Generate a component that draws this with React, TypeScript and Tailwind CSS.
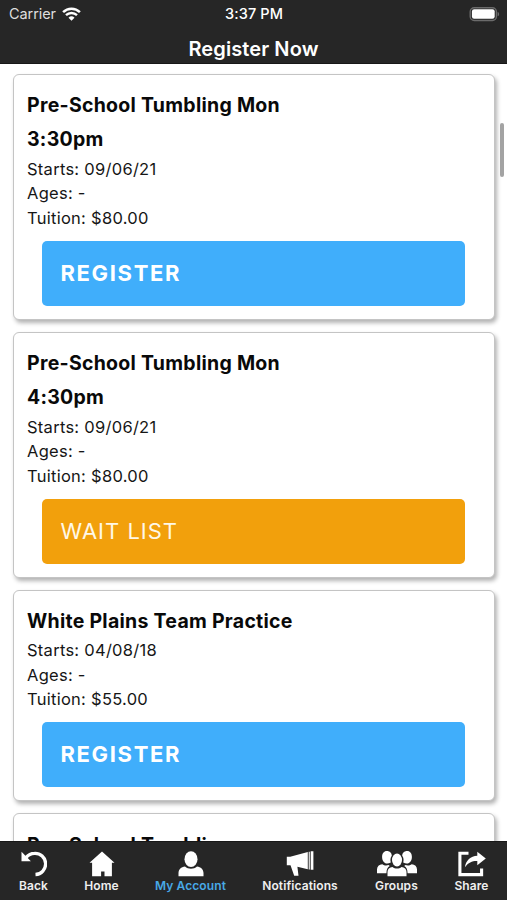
import type { ReactNode } from 'react';

interface ClassItem {
  id: string;
  title: string[];
  details?: string[];
  waitList?: boolean;
}

const classes: ClassItem[] = [
  { id: 'c1', title: ['Pre-School Tumbling Mon', '3:30pm'], details: ['Starts: 09/06/21', 'Ages: -', 'Tuition: $80.00'] },
  { id: 'c2', title: ['Pre-School Tumbling Mon', '4:30pm'], details: ['Starts: 09/06/21', 'Ages: -', 'Tuition: $80.00'], waitList: true },
  { id: 'c3', title: ['White Plains Team Practice'], details: ['Starts: 04/08/18', 'Ages: -', 'Tuition: $55.00'] },
  { id: 'c4', title: ['Pre-School Tumbling'] },
];

const BackIcon = () => (
  <svg width="26" height="26" viewBox="0 0 26 26" className="block">
    <path d="M5 6.600C7.400 3.600 10.300 2.300 13.500 2.300a10.600 10.600 0 0 1 1 21.200" fill="none" stroke="currentColor" strokeWidth="3.300" />
    <path d="M.5.800v9.400h9.400z" fill="currentColor" />
  </svg>
);

const HomeIcon = () => (
  <svg width="26" height="26" viewBox="0 0 26 26" fill="currentColor" className="block">
    <path d="M13 .500 25.500 11.700H22.900V25.200h-7.400v-4.800h-3.400v4.800H3.100V11.700H.500z" />
  </svg>
);

const AccountIcon = () => (
  <svg width="26" height="26" viewBox="0 0 26 26" fill="currentColor" className="block">
    <ellipse cx="13" cy="8.200" rx="6.500" ry="7.900" />
    <path d="M.500 25.200v-3.100c0-3.700 2.700-6 6.500-6.500 3.200 3 8.800 3 12 0 3.800.500 6.500 2.800 6.500 6.500v3.100z" />
  </svg>
);

const MegaphoneIcon = () => (
  <svg width="28" height="26" viewBox="0 0 28 26" fill="currentColor" className="block">
    <path d="M.800 5.800h3.400L21.800.900V18.300l-10.400-2.500 1.100 8.900H8.200L4.500 14.300H.800z" />
    <path d="M22.700.700h1.100v17.900h-1.100zM24.700.300h2.700v18.400h-2.700z" />
  </svg>
);

const GroupsIcon = () => (
  <svg width="40" height="26" viewBox="0 0 40 26" fill="currentColor" className="block">
    <path d="M9.800 0c3.200 0 5 2.200 5 4.700-1.500 2-1.700 4.400-1 6.800-5.500 3-8.700-1-8.700-5.500C5.100 2.400 6.900 0 9.800 0zM30.200 0c-3.200 0-5 2.200-5 4.700 1.500 2 1.700 4.400 1 6.800 5.500 3 8.700-1 8.700-5.500C34.900 2.400 33.100 0 30.200 0z" />
    <ellipse cx="20" cy="9" rx="5" ry="6.400" />
    <path d="M0 22.300v-3.800c0-3.200 2.100-4.900 5.300-5.300 1.700 1.300 4.100 1.700 6.300.8l1.200 1c-2.200 1.300-3.200 3.200-3.400 7.300zM40 22.300v-3.800c0-3.200-2.100-4.900-5.300-5.300-1.700 1.300-4.100 1.700-6.300.8l-1.200 1c2.200 1.300 3.200 3.200 3.400 7.300z" />
    <path d="M10.500 25.300v-4.200c0-3.200 2-4.700 5-5.100 2.500 2.100 6.500 2.100 9 0 3 .4 5 1.900 5 5.100v4.200z" />
  </svg>
);

const ShareIcon = () => (
  <svg width="28" height="26" viewBox="0 0 28 26" className="block">
    <path d="M10.500 2.300H1.900v21.300h21.700v-6" fill="none" stroke="currentColor" strokeWidth="3.100" />
    <path d="m19.300.700 8.500 6.900-8.500 6.600v-4.100c-5-.200-8.800 1.500-12.400 6.200C8 9.500 12.500 5 19.300 4.800z" fill="currentColor" />
  </svg>
);

const WifiIcon = () => (
  <svg width="19" height="14" viewBox="0 0 19 14" fill="none" stroke="white" className="block">
    <path d="M1.100 5.100a12 12 0 0 1 16.800 0" strokeWidth="2.500" />
    <path d="M4 8.200a7.900 7.900 0 0 1 11 0" strokeWidth="2.400" />
    <path d="M9.500 13.700 6.500 10.700a4.300 4.300 0 0 1 6 0z" fill="white" stroke="none" />
  </svg>
);

const BatteryIcon = () => (
  <svg width="31" height="15" viewBox="0 0 31 15" className="block">
    <rect x="1.200" y=".700" width="26.200" height="12.800" rx="4" fill="none" stroke="#6b6b6b" strokeWidth="1.400" />
    <rect x="2.900" y="2.300" width="22.800" height="9.500" rx="2.200" fill="white" />
    <path d="M28.600 4.900c2 .6 2 3.800 0 4.400z" fill="#6b6b6b" />
  </svg>
);

function ClassCard({ item }: { item: ClassItem }) {
  return (
    <article className="shrink-0 rounded-md border border-[#c4c4c4] bg-white px-[13px] pt-[13.500px] pb-[12.700px] shadow-[2px_3px_4px_rgba(0,0,0,0.3)]">
      <h2 className="text-[19.500px] leading-[34.400px] font-bold tracking-[0.270px] text-[#090909]">
        {item.title.map((line) => (
          <span key={line} className="block">{line}</span>
        ))}
      </h2>
      {item.details && (
        <>
          <div className="text-[16.500px] leading-[24.500px] tracking-[0.270px] text-[#161616]">
            {item.details.map((detail) => (
              <p key={detail}>{detail}</p>
            ))}
          </div>
          {item.waitList ? (
            <button className="mt-[10.500px] ml-[15px] block h-[65px] w-[423px] rounded-[5px] bg-[#f2a00c] pl-[18.500px] text-left text-[22px] tracking-[1px] text-[#fff8e7]">
              WAIT LIST
            </button>
          ) : (
            <button className="mt-[10.500px] ml-[15px] block h-[65px] w-[423px] rounded-[5px] bg-[#40aefb] pl-[18.500px] text-left text-[22px] font-bold tracking-[1.650px] text-white">
              REGISTER
            </button>
          )}
        </>
      )}
    </article>
  );
}

function Tab({ label, width, active, children }: { label: string; width: string; active?: boolean; children: ReactNode }) {
  return (
    <a className={`flex shrink-0 flex-col items-center text-white ${width}`}>
      {children}
      <span className={`text-[12px] leading-[17px] font-semibold tracking-[0.100px] whitespace-nowrap ${active ? 'text-[#48a9e6]' : 'text-[#efefef]'}`}>{label}</span>
    </a>
  );
}

export default function App() {
  return (
    <div className="flex h-[900px] w-[507px] flex-col overflow-hidden bg-white font-['Inter',sans-serif]">
      <header className="h-16 shrink-0 border-b border-[#171717] bg-[#262626] text-white">
        <div className="grid h-7 grid-cols-3 items-center pr-[7px] pl-[8px] text-[14.500px]">
          <div className="flex items-center gap-[6px] pl-px text-[#dedede]">
            <span className="tracking-[-0.080px]">Carrier</span>
            <WifiIcon />
          </div>
          <span className="text-center font-medium tracking-[0.100px]">3:37 PM</span>
          <div className="flex justify-end"><BatteryIcon /></div>
        </div>
        <h1 className="pt-[6px] text-center text-[20px] leading-[30px] font-semibold tracking-[0.100px]">Register Now</h1>
      </header>

      <main className="relative flex min-h-0 flex-1 flex-col gap-3 overflow-hidden pt-[9.500px] pr-3 pl-[13px]">
        {classes.map((item) => (
          <ClassCard key={item.id} item={item} />
        ))}
        {/* Scroll indicator */}
        <div className="absolute top-[59px] right-[3px] h-[54px] w-1 rounded-full bg-[#a3a3a3]" />
      </main>

      <nav className="flex h-[59px] shrink-0 border-t border-[#171717] bg-[#262626] pt-[9px]">
        <Tab label="Back" width="w-[67px]"><BackIcon /></Tab>
        <Tab label="Home" width="w-[69px]"><HomeIcon /></Tab>
        <Tab label="My Account" width="w-[109px]" active><AccountIcon /></Tab>
        <Tab label="Notifications" width="w-[110px]"><MegaphoneIcon /></Tab>
        <Tab label="Groups" width="w-[83px]"><GroupsIcon /></Tab>
        <Tab label="Share" width="w-[67px]"><ShareIcon /></Tab>
      </nav>
    </div>
  );
}
